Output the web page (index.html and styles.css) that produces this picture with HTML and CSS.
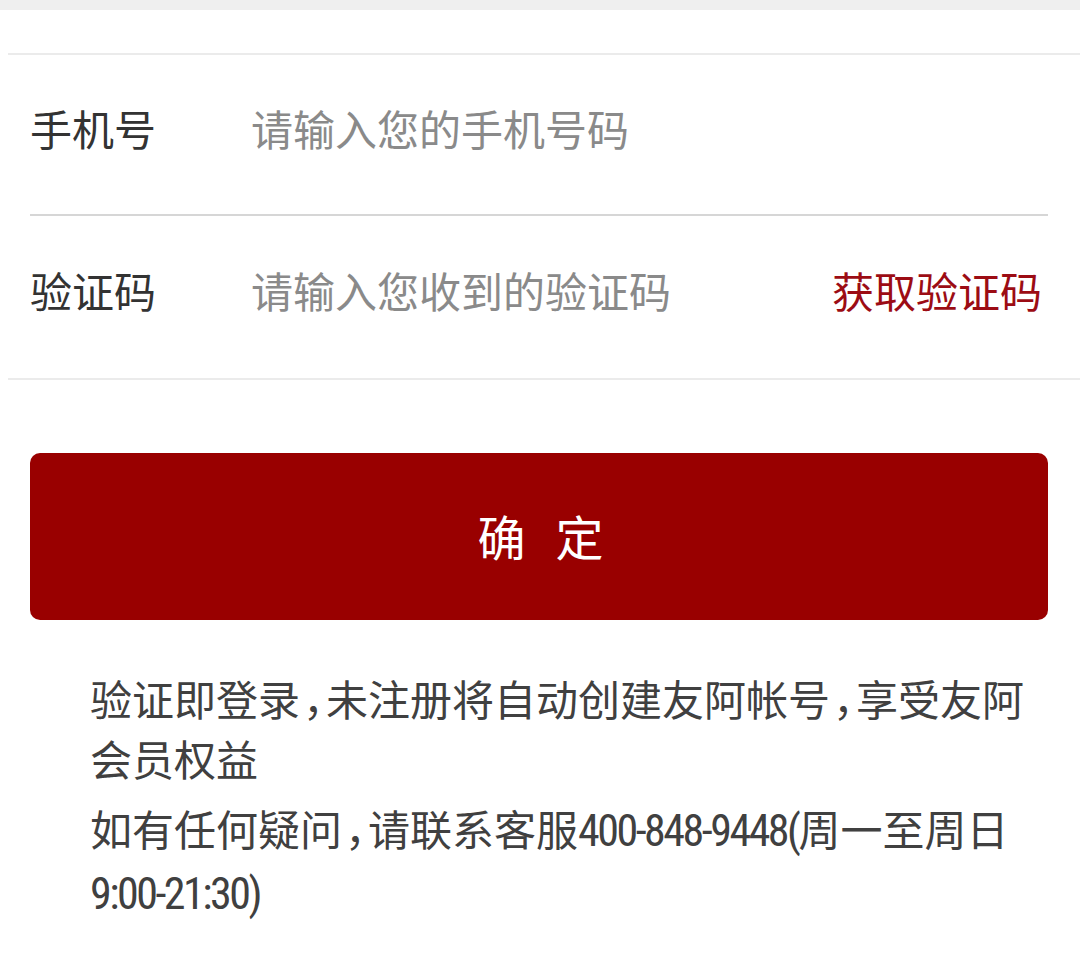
FILE: index.html
```html
<!DOCTYPE html>
<html lang="zh-CN">
<head>
<meta charset="utf-8">
<title>登录</title>
<link rel="stylesheet" href="styles.css">
</head>
<body>
<div class="topbar"></div>
<form class="card">
  <div class="row">
    <label class="label" for="phone">手机号</label>
    <input class="field" id="phone" type="tel" placeholder="请输入您的手机号码">
  </div>
  <div class="divider"></div>
  <div class="row row-last">
    <label class="label" for="code">验证码</label>
    <input class="field" id="code" type="text" placeholder="请输入您收到的验证码">
    <span class="getcode">获取验证码</span>
  </div>
</form>
<button class="submit" type="button">确定</button>
<div class="notes">
  <p>验证即登录<span class="comma">，</span>未注册将自动创建友阿帐号<span class="comma">，</span>享受友阿会员权益</p>
  <p>如有任何疑问<span class="comma">，</span>请联系客服<span class="num">400-848-9448(</span>周一至周日<span class="num">9:00-21:30)</span></p>
</div>
</body>
</html>
```

FILE: styles.css
```css
* { box-sizing: border-box; }

html, body {
  margin: 0;
  padding: 0;
  background: #ffffff;
  width: 1080px;
  font-family: "Noto Sans CJK SC", "Noto Sans", sans-serif;
}

.topbar {
  height: 10px;
  background: #efefef;
}

.card {
  margin: 43px 0 0 8px;
  padding: 0 32px 0 22px;
  border-top: 2px solid #ebebeb;
  border-bottom: 2px solid #ebebeb;
  background: #fff;
}

.row {
  display: flex;
  align-items: center;
  height: 159px;
  padding-bottom: 14px;
}

.row-last {
  height: 162px;
}

.label {
  width: 221px;
  flex: none;
  font-size: 42px;
  line-height: 60px;
  color: #333333;
}

.field {
  flex: 1;
  min-width: 0;
  border: none;
  outline: none;
  padding: 0;
  margin: 0;
  background: transparent;
  font-family: inherit;
  font-size: 42px;
  line-height: 60px;
  height: 60px;
  color: #333333;
}

.field::placeholder {
  color: #8a8a8a;
}

.getcode {
  flex: none;
  font-size: 42px;
  line-height: 60px;
  color: #9c0c14;
  padding-right: 6px;
}

.divider {
  height: 2px;
  background: #d6d6d6;
}

.submit {
  display: block;
  width: 1018px;
  height: 167px;
  margin: 73px 0 0 30px;
  padding: 0 0 4px 33px;
  border: none;
  border-radius: 10px;
  background: #990000;
  color: #ffffff;
  font-family: inherit;
  font-size: 48px;
  letter-spacing: 30px;
  text-align: center;
}

.notes {
  margin: 48px 0 0 90px;
  width: 960px;
  color: #404040;
  font-size: 42px;
  line-height: 60px;
}

.notes p {
  margin: 0;
}

.notes p + p {
  margin-top: 10px;
}

.comma {
  font-feature-settings: "halt" 1;
  padding: 0 2px 0 3px;
}

.num {
  font-family: "Roboto Condensed", "Liberation Sans Narrow", "DejaVu Sans Condensed", "Noto Sans", sans-serif;
  font-stretch: condensed;
  font-size: 44px;
  letter-spacing: -2.5px;
}
```
